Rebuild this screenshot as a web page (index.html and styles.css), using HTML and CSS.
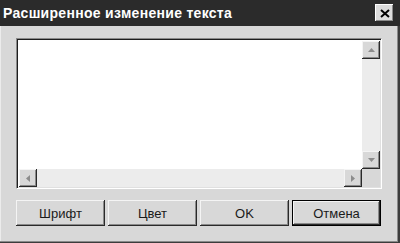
FILE: index.html
```html
<!DOCTYPE html>
<html lang="ru">
<head>
    <meta charset="UTF-8">
    <title>Расширенное изменение текста</title>
    <link rel="stylesheet" href="styles.css">
</head>
<body>
    <div class="window">
        <div class="titlebar">
            <span class="title">Расширенное изменение текста</span>
            <button class="close">
                <svg width="10" height="9" viewBox="0 0 10 9"><path d="M1 1l8 7M9 1l-8 7" stroke="#000" stroke-width="2"/></svg>
            </button>
        </div>
        <div class="client">
            <div class="editbox">
                <div class="text"></div>
                <div class="vscroll">
                    <div class="arrow"><svg width="7" height="4" viewBox="0 0 7 4"><path d="M3.5 0 7 4H0z" fill="#8c8c8c"/></svg></div>
                    <div class="track"></div>
                    <div class="arrow"><svg width="7" height="4" viewBox="0 0 7 4"><path d="M0 0h7L3.5 4z" fill="#8c8c8c"/></svg></div>
                </div>
                <div class="hscroll">
                    <div class="arrow"><svg width="4" height="7" viewBox="0 0 4 7"><path d="M4 0v7L0 3.5z" fill="#8c8c8c"/></svg></div>
                    <div class="track"></div>
                    <div class="arrow"><svg width="4" height="7" viewBox="0 0 4 7"><path d="M0 0v7l4-3.5z" fill="#8c8c8c"/></svg></div>
                </div>
                <div class="corner"></div>
            </div>
            <div class="buttons">
                <button class="btn">Шрифт</button>
                <button class="btn">Цвет</button>
                <button class="btn">OK</button>
                <button class="btn default">Отмена</button>
            </div>
        </div>
    </div>
</body>
</html>
```

FILE: styles.css
```css
body { margin: 0; background: #d8d8d8; font-family: "Liberation Sans", Arial, sans-serif; }
.window { width: 400px; height: 243px; box-sizing: border-box; background: #d8d8d8; box-shadow: inset -2px -1px #3c3c3c, inset -3px -2px #8a8a8a, inset 1px 1px #ececec; }
.titlebar { height: 26px; background: #2b2b2b; display: flex; align-items: center; justify-content: space-between; padding: 0 6px 0 3px; }
.title { color: #fff; font-weight: bold; font-size: 14px; letter-spacing: 0.3px; }
.close { width: 19px; height: 18px; padding: 0; margin: 0; border: none; background: #dcdcdc; display: flex; align-items: center; justify-content: center; box-shadow: inset -1px -1px #2a2a2a, inset 1px 1px #fff, inset -2px -2px #8a8a8a; }
.client { padding: 12px 18px 0 16px; }
.editbox { width: 366px; height: 151px; box-sizing: border-box; background: #fff; display: grid; grid-template-columns: 1fr 18px; grid-template-rows: 1fr 18px; border-top: 1px solid #8a8a8a; border-left: 1px solid #8a8a8a; border-right: 1px solid #fff; border-bottom: 1px solid #fff; box-shadow: inset 1px 1px #1e1e1e, inset -1px -1px #e0e0e0; padding: 2px 1px 1px 2px; }
.vscroll { display: flex; flex-direction: column; }
.hscroll { display: flex; }
.track { flex: 1; background: #ececec; }
.arrow { width: 18px; height: 18px; box-sizing: border-box; background: #d8d8d8; display: flex; align-items: center; justify-content: center; box-shadow: inset -1px -1px #2a2a2a, inset 1px 1px #f4f4f4, inset -2px -2px #8a8a8a; }
.corner { background: #d8d8d8; }
.buttons { display: flex; gap: 3px; margin-top: 11px; }
.btn { width: 89px; height: 26px; padding: 0; border: none; background: #d8d8d8; font-family: "Liberation Sans", Arial, sans-serif; font-size: 13px; color: #1a1a1a; box-shadow: inset -1px -1px #2a2a2a, inset 1px 1px #f4f4f4, inset -2px -2px #8a8a8a; }
.btn.default { border: 1px solid #000; }
```
